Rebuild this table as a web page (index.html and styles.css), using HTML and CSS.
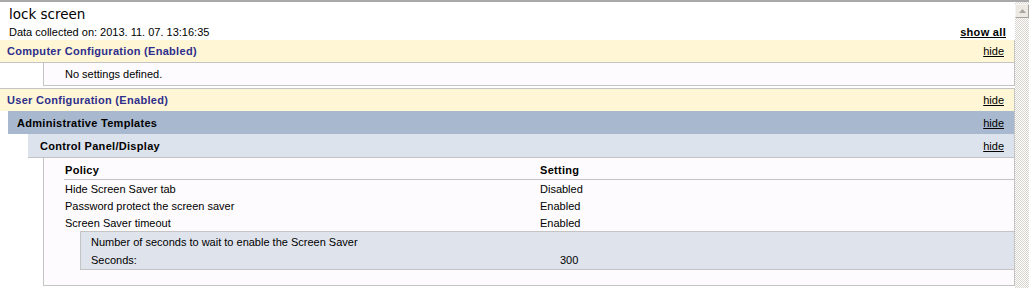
FILE: index.html
```html
<!DOCTYPE html>
<html>
<head>
<meta charset="utf-8">
<title>lock screen</title>
<link rel="stylesheet" href="styles.css">
</head>
<body>
<div class="window">
  <div class="page">
    <div class="title">lock screen</div>
    <div class="meta">
      <span>Data collected on: 2013. 11. 07. 13:16:35</span>
      <a class="showall" href="#">show all</a>
    </div>

    <div class="he0 he0-computer">
      <span>Computer Configuration (Enabled)</span>
      <a class="hide" href="#">hide</a>
    </div>
    <div class="box box-empty">
      <div class="nosettings">No settings defined.</div>
    </div>

    <div class="he0 he0-user">
      <span>User Configuration (Enabled)</span>
      <a class="hide" href="#">hide</a>
    </div>
    <div class="he1">
      <span>Administrative Templates</span>
      <a class="hide" href="#">hide</a>
    </div>
    <div class="he2">
      <span>Control Panel/Display</span>
      <a class="hide" href="#">hide</a>
    </div>
    <div class="box box-content">
      <div class="table">
        <div class="row head">
          <span class="c1">Policy</span>
          <span class="c2">Setting</span>
        </div>
        <div class="row">
          <span class="c1">Hide Screen Saver tab</span>
          <span class="c2">Disabled</span>
        </div>
        <div class="row">
          <span class="c1">Password protect the screen saver</span>
          <span class="c2">Enabled</span>
        </div>
        <div class="row">
          <span class="c1">Screen Saver timeout</span>
          <span class="c2">Enabled</span>
        </div>
      </div>
      <div class="sub">
        <div class="subrow">
          <span class="s1">Number of seconds to wait to enable the Screen Saver</span>
        </div>
        <div class="subrow">
          <span class="s1">Seconds:</span>
          <span class="s2">300</span>
        </div>
      </div>
    </div>
  </div>
  <div class="scrollbar">
    <div class="sb-up">
      <svg width="7" height="4" viewBox="0 0 7 4"><path d="M3.5 0 L7 4 L0 4 Z" fill="#a7a6a2"/></svg>
    </div>
    <div class="sb-track"></div>
  </div>
</div>
</body>
</html>
```

FILE: styles.css
```css
*, *::before, *::after {
  box-sizing: border-box;
}
html, body {
  margin: 0;
  padding: 0;
  background: #ffffff;
}
body {
  width: 1029px;
  height: 288px;
  overflow: hidden;
  font-family: "Liberation Sans", Arial, sans-serif;
  font-size: 11px;
  color: #000;
}
a {
  color: #000;
  text-decoration: underline;
}
.window {
  display: flex;
  border-top: 2px solid #a9a9a9;
  height: 288px;
}
.page {
  width: 1015px;
  display: flex;
  flex-direction: column;
}
.title {
  font-family: "DejaVu Sans", Verdana, sans-serif;
  font-size: 13.5px;
  height: 22px;
  line-height: 24px;
  padding-left: 9px;
  color: #000;
}
.meta {
  height: 16px;
  line-height: 16px;
  display: flex;
  justify-content: space-between;
  padding-left: 9px;
  padding-right: 9px;
}
.showall {
  font-weight: bold;
  letter-spacing: 0.3px;
}
.he0, .he1, .he2 {
  display: flex;
  justify-content: space-between;
  align-items: center;
  font-weight: bold;
  letter-spacing: 0.3px;
  padding-right: 10px;
  border-right: 1px solid #c4c4c4;
}
.he0 .hide, .he1 .hide, .he2 .hide {
  font-weight: normal;
  letter-spacing: 0;
}
.he0 {
  background: #fef6d5;
  color: #2e2e8c;
  padding-left: 7px;
  height: 23px;
}
.he0-computer {
  border-bottom: 1px solid #c4c4c4;
}
.he0-user {
  margin-top: 2px;
  border-top: 1px solid #c4c4c4;
}
.he1 {
  background: #a8b9cf;
  margin-left: 8px;
  padding-left: 9px;
  height: 23px;
}
.he2 {
  background: #dde3ec;
  margin-left: 28px;
  padding-left: 12px;
  height: 24px;
  border-bottom: 1px solid #c4c4c4;
}
.box {
  margin-left: 43px;
  background: #fdfbfd;
  border-left: 1px solid #c4c4c4;
  border-right: 1px solid #c4c4c4;
  border-bottom: 1px solid #c4c4c4;
}
.box-empty {
  height: 23px;
}
.nosettings {
  padding-left: 21px;
  line-height: 22px;
}
.box-content {
  height: 128px;
  padding-bottom: 15px;
}
.table {
  margin-left: 20px;
}
.row {
  display: grid;
  grid-template-columns: 475px 1fr;
  height: 17px;
  line-height: 18px;
  padding-left: 1px;
}
.row.head {
  font-weight: bold;
  letter-spacing: 0.3px;
  height: 22px;
  line-height: 14px;
  padding-top: 5px;
  padding-bottom: 2px;
  border-bottom: 1px solid #c4c4c4;
}
.sub {
  margin-left: 36px;
  height: 39px;
  background: #dfe3ec;
  border-left: 1px solid #c4c4c4;
  border-top: 1px solid #c4c4c4;
  border-bottom: 1px solid #c4c4c4;
  padding: 1px 0 0 10px;
}
.subrow {
  display: grid;
  grid-template-columns: 469px 1fr;
  height: 18px;
  line-height: 18px;
}
.scrollbar {
  width: 14px;
  display: flex;
  flex-direction: column;
  background-color: #ffffff;
  background-image: repeating-conic-gradient(#d8d5ce 0 25%, #ffffff 0 50%);
  background-size: 2px 2px;
}
.sb-up {
  height: 14px;
  margin-top: 2px;
  background: #ece9e2;
  border-top: 1px solid #f4f3ef;
  border-left: 1px solid #f4f3ef;
  border-right: 1px solid #a5a39c;
  border-bottom: 1px solid #a5a39c;
  display: flex;
  align-items: center;
  justify-content: center;
}
.sb-track {
  flex: 1;
}
```
